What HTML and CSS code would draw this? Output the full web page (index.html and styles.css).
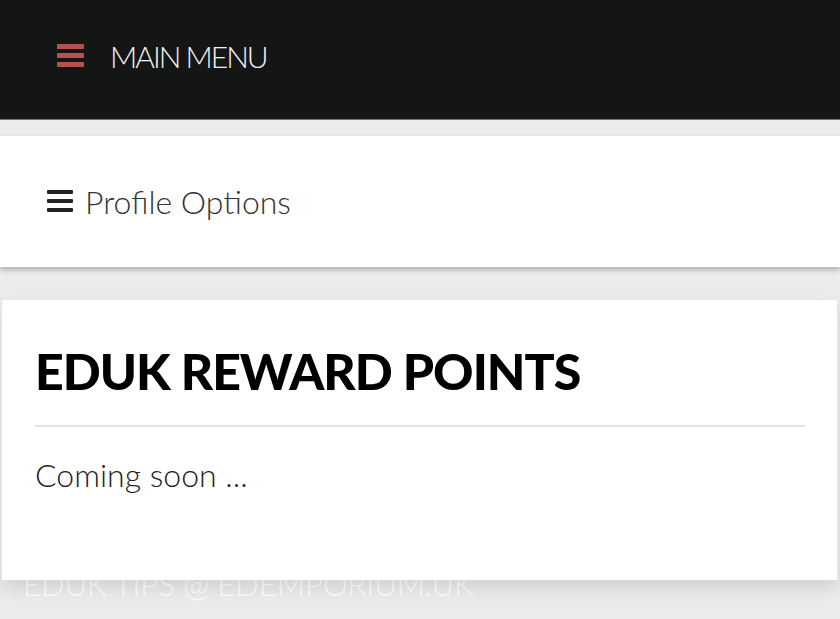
FILE: index.html
```html
<!DOCTYPE html>
<html>
<head>
    <title>EDUK Reward Points</title>
    <link rel="stylesheet" href="styles.css">
</head>
<body>
    <header class="topbar">
        <span class="menu-icon">
            <svg width="27" height="25" viewBox="0 0 27 25">
                <rect x="0" y="1" width="27" height="5" rx="1" fill="#b5524f"/>
                <rect x="0" y="10" width="27" height="5" rx="1" fill="#b5524f"/>
                <rect x="0" y="19" width="27" height="5" rx="1" fill="#b5524f"/>
            </svg>
        </span>
        <span class="menu-title">MAIN MENU</span>
    </header>

    <div class="options-bar">
        <span class="options-icon">
            <svg width="26" height="23" viewBox="0 0 26 23">
                <rect x="0" y="0" width="26" height="4" rx="1" fill="#222"/>
                <rect x="0" y="9" width="26" height="4" rx="1" fill="#222"/>
                <rect x="0" y="18" width="26" height="4" rx="1" fill="#222"/>
            </svg>
        </span>
        <span class="options-title">Profile Options</span>
    </div>

    <main class="card">
        <h1>EDUK REWARD POINTS</h1>
        <hr>
        <p>Coming soon ...</p>
    </main>

    <footer class="footer">EDUK TIPS @ EDEMPORIUM.UK</footer>
</body>
</html>
```

FILE: styles.css
```css
/* page base */
body {
    margin: 0;
    padding: 0;
    font-family: Lato, "Open Sans", sans-serif;
    background-color: #ececec;
    overflow: hidden;
}

/* top black menu bar */
.topbar {
    height: 120px;
    background-color: #141515;
    border-bottom: 1px solid #777;
    display: flex;
    align-items: center;
    padding: 0 0 8px 57px;
    box-sizing: border-box;
}

.menu-icon {
    display: flex;
    margin-right: 26px;
}

.menu-title {
    color: #f2f2f2;
    font-size: 30px;
    font-weight: 300;
    letter-spacing: -2px;
}

/* profile options strip */
.options-bar {
    margin-top: 16px;
    height: 131px;
    background-color: #fff;
    display: flex;
    align-items: center;
    padding-left: 47px;
    box-shadow: 0 3px 5px rgba(0, 0, 0, 0.25);
}

.options-icon {
    display: flex;
    margin-right: 12px;
}

.options-title {
    color: #333;
    font-size: 32px;
    font-weight: 300;
}

/* content card */
.card {
    position: relative;
    z-index: 1;
    margin: 33px 2px 0 1px;
    height: 280px;
    box-sizing: border-box;
    background-color: #fff;
    border-left: 1px solid #e6e6e6;
    border-right: 1px solid #e6e6e6;
    padding: 37px 32px 0 33px;
    box-shadow: 0 8px 18px rgba(0, 0, 0, 0.12);
}

.card h1 {
    margin: 0;
    font-size: 50px;
    font-weight: 900;
    color: #000;
    line-height: 68px;
    letter-spacing: -1px;
}

.card hr {
    border: none;
    border-top: 2px solid #e2e2e2;
    margin: 20px 0 0 0;
}

.card p {
    margin: 28px 0 0 0;
    font-size: 32px;
    font-weight: 300;
    color: #222;
}

.footer {
    margin-top: -15px;
    padding-left: 23px;
    color: #fff;
    font-size: 31px;
    font-weight: 300;
    height: 60px;
}
```
